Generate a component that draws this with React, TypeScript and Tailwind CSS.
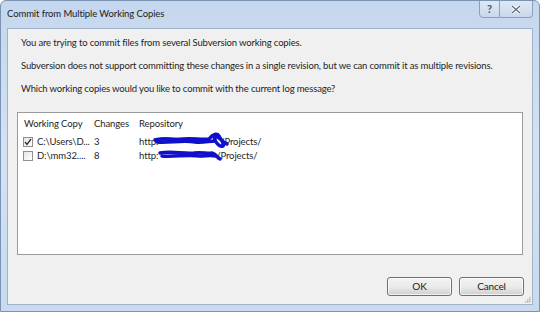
import React from "react";

const font = { fontFamily: 'Lato, "Noto Sans", sans-serif' };

function Check({ checked }: { checked: boolean }) {
  return (
    <div className="w-[10px] h-[10px] border border-[#8f8f8f] bg-gradient-to-br from-[#e6e6e6] to-white flex items-center justify-center shrink-0">
      {checked && (
        <svg width="8" height="8" viewBox="0 0 8 8">
          <path d="M1 4 L3 6.5 L7 1" stroke="#333" strokeWidth="1.3" fill="none" />
        </svg>
      )}
    </div>
  );
}

function Btn({ label }: { label: string }) {
  return (
    <div className="h-[19px] w-[65px] rounded-[3px] border border-[#707070] bg-gradient-to-b from-[#f2f2f2] via-[#ebebeb] to-[#cfcfcf] flex items-center justify-center text-[10px] text-[#1a1a1a] shadow-[inset_0_0_0_1px_rgba(255,255,255,0.7)]">
      {label}
    </div>
  );
}

export default function App() {
  return (
    <div
      className="w-[540px] h-[312px] bg-gradient-to-b from-[#c5d7ee] via-[#d3e2f3] to-[#c9daef] border border-[#7a93b3] rounded-t-[6px] flex flex-col overflow-hidden relative"
      style={font}
    >
      <div className="h-[27px] flex items-start pl-[6px] pt-[6px] shrink-0">
        <span className="text-[9.5px] tracking-[-0.1px] text-[#1b1b1b] leading-[14px] whitespace-nowrap">Commit from Multiple Working Copies</span>
      </div>
      <div className="absolute top-[-1px] right-[6px] flex">
        <div className="w-[21px] h-[18px] border border-[#8aa0bb] rounded-bl-[4px] bg-gradient-to-b from-[#dfe9f5] to-[#c8d8ec] flex items-center justify-center text-[11px] text-[#4a5a6e] font-bold">?</div>
        <div className="w-[33px] h-[18px] border border-l-0 border-[#8aa0bb] rounded-br-[4px] bg-gradient-to-b from-[#dfe9f5] to-[#c8d8ec] flex items-center justify-center">
          <svg width="10" height="9" viewBox="0 0 10 9">
            <path d="M1 1 L9 8 M9 1 L1 8" stroke="#ffffff" strokeWidth="3" />
            <path d="M1 1 L9 8 M9 1 L1 8" stroke="#5b6b80" strokeWidth="1.2" />
          </svg>
        </div>
      </div>
      <div className="flex-1 mx-[6px] mb-[6px] bg-[#f0f0f0] border border-[#9fb2c9] flex flex-col text-[9.5px] tracking-[-0.15px] text-[#1e1e1e] relative">
        <div className="flex flex-col gap-[9px] pl-[13px] pt-[7px] whitespace-nowrap">
          <div className="leading-[14px]">You are trying to commit files from several Subversion working copies.</div>
          <div className="leading-[14px]">Subversion does not support committing these changes in a single revision, but we can commit it as multiple revisions.</div>
          <div className="leading-[14px]">Which working copies would you like to commit with the current log message?</div>
        </div>
        <div className="mx-[9px] mt-[16px] h-[143px] bg-white border border-[#9a9a9a] text-[9.5px] tracking-[-0.1px] text-[#1e1e1e] whitespace-nowrap">
          <div className="flex h-[22px] items-center pl-[6px]">
            <div className="w-[70px]">Working Copy</div>
            <div className="w-[45px]">Changes</div>
            <div>Repository</div>
          </div>
          <div className="flex h-[14px] items-center pl-[5px]">
            <div className="w-[71px] flex items-center gap-[4px]">
              <Check checked />
              <span>C:\Users\D...</span>
            </div>
            <div className="w-[45px]">3</div>
            <div className="relative">
              <span>http:</span>
              <span className="inline-block w-[62px]"></span>
              <span>/Projects/</span>
              <svg className="absolute left-[14px] top-[-5px]" width="76" height="22" viewBox="0 0 76 22">
                <path d="M2 10 C10 7 20 11 30 9 C40 8 48 10 56 9 C60 4 64 3 66 6 C68 10 72 14 70 16 C66 18 60 9 62 7 C66 5 68 12 74 14" stroke="#1010cc" strokeWidth="3.5" fill="none" strokeLinecap="round" />
                <path d="M4 12 C16 13 30 10 42 12 C50 13 56 11 62 11" stroke="#1010cc" strokeWidth="3.5" fill="none" strokeLinecap="round" />
                <path d="M8 9 C20 8 34 11 50 10" stroke="#1010cc" strokeWidth="3" fill="none" strokeLinecap="round" />
              </svg>
            </div>
          </div>
          <div className="flex h-[14px] items-center pl-[5px]">
            <div className="w-[71px] flex items-center gap-[4px]">
              <Check checked={false} />
              <span>D:\mm32....</span>
            </div>
            <div className="w-[45px]">8</div>
            <div className="relative">
              <span>http:</span>
              <span className="inline-block w-[58px]"></span>
              <span>/Projects/</span>
              <svg className="absolute left-[19px] top-[-5px]" width="66" height="22" viewBox="0 0 66 22">
                <path d="M2 9 C14 7 26 10 36 9 C44 8 50 10 54 9 C58 10 60 14 62 15" stroke="#1010cc" strokeWidth="3.5" fill="none" strokeLinecap="round" />
                <path d="M4 12 C18 13 30 10 42 12 C48 12 52 11 58 12" stroke="#1010cc" strokeWidth="3.5" fill="none" strokeLinecap="round" />
              </svg>
            </div>
          </div>
        </div>
        <div className="flex-1 flex items-end justify-end gap-[7px] pr-[8px] pb-[8px]">
          <Btn label="OK" />
          <Btn label="Cancel" />
        </div>
        <svg className="absolute right-[1px] bottom-[1px]" width="8" height="8" viewBox="0 0 8 8">
          <rect x="6" y="2" width="1.5" height="1.5" fill="#b5b5b5" />
          <rect x="4" y="4" width="1.5" height="1.5" fill="#b5b5b5" />
          <rect x="6" y="4" width="1.5" height="1.5" fill="#b5b5b5" />
          <rect x="2" y="6" width="1.5" height="1.5" fill="#b5b5b5" />
          <rect x="4" y="6" width="1.5" height="1.5" fill="#b5b5b5" />
          <rect x="6" y="6" width="1.5" height="1.5" fill="#b5b5b5" />
        </svg>
      </div>
    </div>
  );
}
